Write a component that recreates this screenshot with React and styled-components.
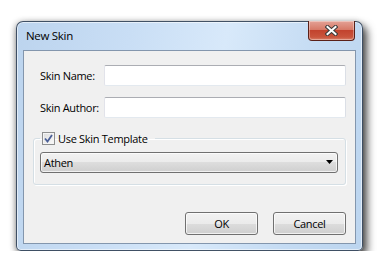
import React from 'react';
import styled, { createGlobalStyle } from 'styled-components';

const GlobalStyle = createGlobalStyle`
  html, body {
    margin: 0;
    padding: 0;
    background: #ffffff;
  }
  body {
    font-family: "Open Sans", "Noto Sans", sans-serif;
    font-size: 11px;
    letter-spacing: -0.3px;
    color: #000;
  }
`;

const App = () => {
  return (
    <>
      <GlobalStyle />
      <Page>
        <Window>
          <TitleBar>
            <Title>New Skin</Title>
            <CloseButton>
              <svg width="13" height="11" viewBox="0 0 13 11">
                <path d="M2.5 2 L10.5 9 M10.5 2 L2.5 9" stroke="#3a3a3a" strokeWidth="4" strokeLinecap="square" />
                <path d="M2.5 2 L10.5 9 M10.5 2 L2.5 9" stroke="#ffffff" strokeWidth="2" strokeLinecap="square" />
              </svg>
            </CloseButton>
          </TitleBar>
          <Client>
            <Form>
              <Label>Skin Name:</Label>
              <TextBox />
              <Label>Skin Author:</Label>
              <TextBox />
            </Form>
            <Group>
              <Legend>
                <CheckBox>
                  <svg width="9" height="9" viewBox="0 0 9 9">
                    <path d="M1 4.5 L3.5 7.5 L8 1" stroke="#4a5f97" strokeWidth="1.8" fill="none" />
                  </svg>
                </CheckBox>
                Use Skin Template
              </Legend>
              <ComboBox>
                <span>Athen</span>
                <svg width="8" height="5" viewBox="0 0 8 5">
                  <polygon points="0,0 7,0 3.5,4" fill="#000" />
                </svg>
              </ComboBox>
            </Group>
            <Buttons>
              <Button>OK</Button>
              <Button>Cancel</Button>
            </Buttons>
          </Client>
        </Window>
      </Page>
    </>
  );
};

export default App;

// Styled Components
const Page = styled.div`
  padding: 21px 0 0 16px;
`;

const Window = styled.div`
  box-sizing: border-box;
  width: 347px;
  height: 230px;
  display: flex;
  flex-direction: column;
  padding: 0 6px 6px 6px;
  border: 1px solid rgba(40, 55, 75, 0.85);
  border-radius: 7px 7px 5px 5px;
  background: linear-gradient(100deg, #bcd4ee 0%, #c9def5 30%, #d8e9fa 55%, #c4dbf3 80%, #bcd5ef 100%);
  box-shadow: 4px 5px 9px rgba(0, 0, 0, 0.7), -1px 1px 6px rgba(0, 0, 0, 0.3),
    inset 0 0 0 1px rgba(255, 255, 255, 0.55);
`;

const TitleBar = styled.div`
  height: 28px;
  display: flex;
  justify-content: space-between;
  align-items: flex-start;
`;

const Title = styled.div`
  padding: 6px 0 0 3px;
  font-size: 11.5px;
  color: #000;
`;

const CloseButton = styled.div`
  box-sizing: border-box;
  width: 47px;
  height: 20px;
  margin-top: -1px;
  margin-right: 1px;
  display: flex;
  align-items: center;
  justify-content: center;
  border: 1px solid #5a2018;
  border-top: none;
  border-radius: 0 0 4px 4px;
  background: linear-gradient(to bottom, #e4a296 0%, #d77a68 45%, #c2432e 50%, #c9553d 85%, #d9816a 100%);
  box-shadow: inset 0 0 0 1px rgba(255, 255, 255, 0.35);
`;

const Client = styled.div`
  flex: 1;
  display: flex;
  flex-direction: column;
  padding: 14px 9px 8px 9px;
  background: #f0f0f0;
  border: 1px solid #8396ad;
`;

const Form = styled.div`
  display: grid;
  grid-template-columns: 64px 1fr;
  row-gap: 11px;
  align-items: center;
  padding-left: 7px;
`;

const Label = styled.div`
  font-size: 11px;
  white-space: nowrap;
`;

const TextBox = styled.div`
  box-sizing: border-box;
  height: 21px;
  background: #fff;
  border: 1px solid;
  border-color: #abadb3 #dbdfe6 #e3e9ef #e2e3ea;
  border-radius: 2px;
`;

const Group = styled.fieldset`
  margin: 13px 0 0 0;
  padding: 6px 7px 11px 6px;
  min-width: 0;
  border: 1px solid #d5dfe5;
  border-radius: 3px;
  box-shadow: inset 1px 1px 0 #ffffff, 1px 1px 0 #ffffff;
`;

const Legend = styled.legend`
  display: flex;
  align-items: center;
  gap: 3px;
  padding: 0 7px 0 2px;
  font-size: 11px;
  line-height: 15px;
`;

const CheckBox = styled.span`
  box-sizing: border-box;
  width: 13px;
  height: 13px;
  display: flex;
  align-items: center;
  justify-content: center;
  border: 1px solid #8e8f8f;
  background: linear-gradient(135deg, #dcdcdc, #fafafa);
  box-shadow: inset 0 0 0 1px #f4f4f4;
`;

const ComboBox = styled.div`
  box-sizing: border-box;
  height: 21px;
  display: flex;
  align-items: center;
  justify-content: space-between;
  padding: 0 3px 0 3px;
  border: 1px solid #707070;
  border-radius: 3px;
  background: linear-gradient(to bottom, #f2f2f2 0%, #ebebeb 50%, #dddddd 50%, #cfcfcf 100%);
  box-shadow: inset 0 0 0 1px rgba(255, 255, 255, 0.7);
  font-size: 11px;
`;

const Buttons = styled.div`
  margin-top: auto;
  display: flex;
  justify-content: flex-end;
  gap: 15px;
`;

const Button = styled.div`
  box-sizing: border-box;
  width: 73px;
  height: 23px;
  display: flex;
  align-items: center;
  justify-content: center;
  border: 1px solid #707070;
  border-radius: 3px;
  background: linear-gradient(to bottom, #f2f2f2 0%, #ebebeb 50%, #dddddd 50%, #cfcfcf 100%);
  box-shadow: inset 0 0 0 1px rgba(255, 255, 255, 0.7);
  font-size: 11px;
`;
